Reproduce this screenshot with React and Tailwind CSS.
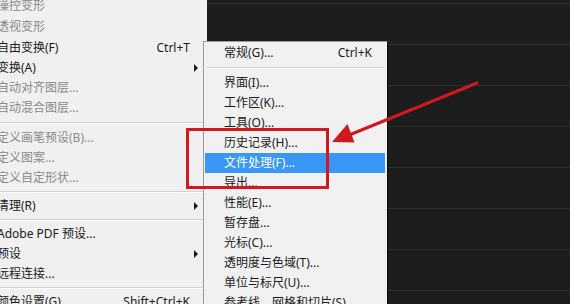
// App.jsx - Photoshop 编辑菜单 > 首选项 子菜单截图
const LEFT_ITEMS = [
  { label: '操控变形', dim: true, h: 'h-[21px]' },
  { label: '透视变形', dim: true, h: 'h-[21px]' },
  { label: '自由变换(F)', shortcut: 'Ctrl+T', h: 'h-[21px]' },
  { label: '变换(A)', sub: true },
  { label: '自动对齐图层...', dim: true },
  { label: '自动混合图层...', dim: true },
  { sep: true, h: 'h-[10px]' },
  { label: '定义画笔预设(B)...', dim: true },
  { label: '定义图案...', dim: true },
  { label: '定义自定形状...', dim: true },
  { sep: true, h: 'h-[8px]' },
  { label: '清理(R)', sub: true },
  { sep: true, h: 'h-[8px]' },
  { label: 'Adobe PDF 预设...' },
  { label: '预设', sub: true },
  { label: '远程连接...' },
  { sep: true, h: 'h-[8px]' },
  { label: '颜色设置(G)', shortcut: 'Shift+Ctrl+K' },
];

const PREFS = [
  '界面(I)...',
  '工作区(K)...',
  '工具(O)...',
  '历史记录(H)...',
  '文件处理(F)...',
  '导出...',
  '性能(E)...',
  '暂存盘...',
  '光标(C)...',
  '透明度与色域(T)...',
  '单位与标尺(U)...',
  '参考线、网格和切片(S)...',
];

const Arrow = () => (
  <span className="block w-0 h-0 border-y-[4px] border-y-transparent border-l-[4px] border-l-[#1a1a1a]" />
);

const Separator = ({ h, className = '' }) => (
  <div className={`${h} flex items-center ${className}`}>
    <div className="w-full border-t border-[#d2d2d2] border-b border-b-white" />
  </div>
);

const LeftMenu = () => (
  <div className="w-[207px] h-full shrink-0 bg-[#f0f0f0] overflow-hidden">
    <div className="-mt-[5px]">
      {LEFT_ITEMS.map((item, i) =>
        item.sep ? (
          <Separator key={i} h={item.h} className="pr-[4px]" />
        ) : (
          <div
            key={i}
            className={`${item.h || 'h-[20px]'} flex items-center -ml-[3px] pr-[17px] whitespace-nowrap ${
              item.dim ? 'text-[#8a8a8a]' : 'text-[#1b1b1b]'
            }`}
          >
            <span className="flex-1">{item.label}</span>
            {item.shortcut && <span>{item.shortcut}</span>}
            {item.sub && (
              <span className="mr-[-8px]">
                <Arrow />
              </span>
            )}
          </div>
        )
      )}
    </div>
  </div>
);

const Backdrop = () => (
  <div className="flex-1 h-full flex flex-col">
    <div className="h-[3px] shrink-0" />
    {Array.from({ length: 8 }).map((_, i) => (
      <div key={i} className="h-[41px] shrink-0 border-t border-[#2e2e2e]" />
    ))}
  </div>
);

const PrefsMenu = () => (
  <div className="absolute left-[203px] top-[41px] w-[185px] h-[280px] bg-[#f1f1f1] border-l border-t border-[#9c9c9c] border-r border-r-[#0a0a0a] pt-[1px]">
    <div className="h-[20px] leading-[20px] flex items-center pl-[20px] pr-[15px] text-[#1b1b1b]">
      <span className="flex-1">常规(G)...</span>
      <span>Ctrl+K</span>
    </div>
    <Separator h="h-[10px]" className="pl-[3px] pr-[3px]" />
    {PREFS.map((label) => {
      const active = label.startsWith('文件处理');
      return (
        <div
          key={label}
          className={`h-[20px] leading-[20px] ml-[1px] mr-[2px] pl-[19px] whitespace-nowrap ${
            active ? 'bg-[#3a97f6] text-white' : 'text-[#1b1b1b]'
          }`}
        >
          {label}
        </div>
      );
    })}
  </div>
);

// 红色标注：方框 + 箭头
const Annotation = () => (
  <>
    <div className="absolute left-[186px] top-[128px] w-[143px] h-[61px] border-[3px] border-[#cf1a21]" />
    <svg className="absolute inset-0 pointer-events-none" width="570" height="304" viewBox="0 0 570 304">
      <line x1="477" y1="83" x2="348" y2="135.5" stroke="#d0181f" strokeWidth="3" strokeLinecap="round" />
      <polygon points="332,142 354.5,142.5 347.5,124" fill="#d0181f" />
    </svg>
  </>
);

export default function App() {
  return (
    <div className="relative w-[570px] h-[304px] overflow-hidden bg-[#1d1d1d] flex text-[12px] font-['Noto_Sans','Noto_Sans_CJK_SC',sans-serif]">
      <LeftMenu />
      <Backdrop />
      <PrefsMenu />
      <Annotation />
    </div>
  );
}
